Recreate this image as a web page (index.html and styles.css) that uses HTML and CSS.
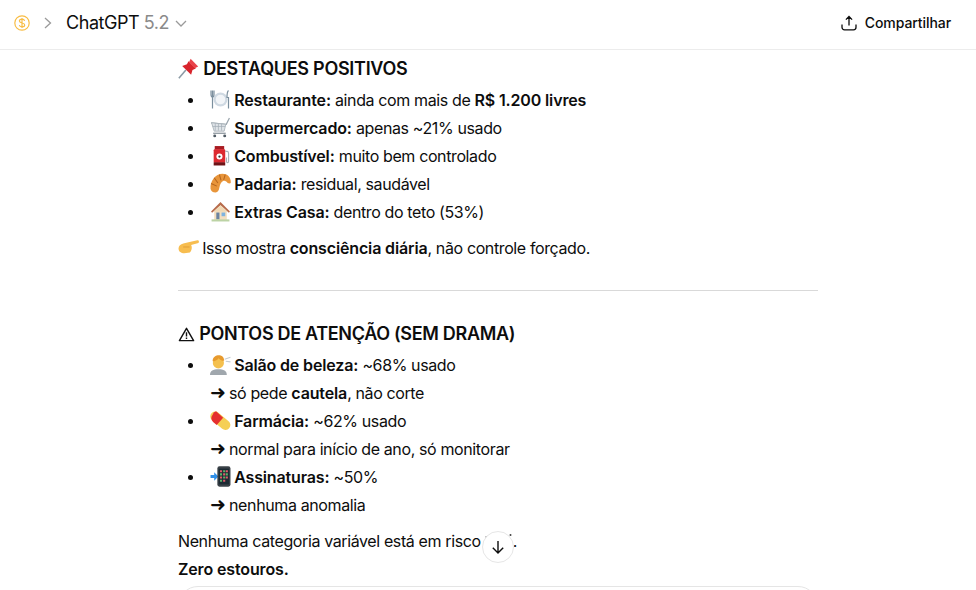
FILE: index.html
```html
<!DOCTYPE html>
<html lang="pt-BR">
<head>
<meta charset="utf-8">
<title>ChatGPT 5.2</title>
<link rel="stylesheet" href="styles.css">
</head>
<body>
<header class="topbar">
  <div class="crumbs">
    <svg class="coin" viewBox="0 0 16 16"><circle cx="8" cy="8" r="7.200"/><path d="M10.600 5.800C10.300 4.800 9.300 4.200 8 4.200c-1.500 0-2.600.8-2.600 1.900 0 2.600 5.300 1.200 5.300 3.800 0 1.200-1.100 1.900-2.700 1.900-1.400 0-2.400-.6-2.700-1.600M8 3v10"/></svg>
    <svg class="chev" viewBox="0 0 10 14"><path d="M2 2l5.500 5L2 12"/></svg>
    <span class="model">ChatGPT <span class="ver">5.2</span></span>
    <svg class="caret" viewBox="0 0 14 10"><path d="M2 2l5 5 5-5"/></svg>
  </div>
  <div class="actions">
    <button class="share">
      <svg viewBox="0 0 16 16"><path d="M8 10.500V1.600M4.900 4.600 8 1.500l3.100 3.100M1 9.500v2.800A2.500 2.500 0 0 0 3.500 14.800h9a2.500 2.500 0 0 0 2.500-2.500V9.500"/></svg>
      <span>Compartilhar</span>
    </button>
  </div>
</header>
<main class="thread">
  <article class="msg">
    <h3><svg class="emo" viewBox="0 0 20 20"><path d="M.8 19.200 7.500 11.500" stroke="#8b9aa5" stroke-width="1.500"/><path d="M10 3 17 10 13.800 11.500 12.500 16 4 7.500 8.500 6Z" fill="#d8242c"/><path d="M10.500 4 12 .8 19.200 8 16 9.800Z" fill="#e8434a"/></svg> DESTAQUES POSITIVOS</h3>
    <ul>
      <li><svg class="emo tl" viewBox="0 0 21 20"><circle cx="10.500" cy="10" r="7" fill="#cfd9e2"/><circle cx="10.500" cy="10" r="4.800" fill="#f2f5f8"/><path d="M1 1v4c0 1.500.7 2.500 1.500 2.500S4 6.500 4 5V1M2.500 1v18M18.500 1c-1.200 1-1.500 4-1.500 7h1.500v11" fill="none" stroke="#7b8f9e" stroke-width="1.200"/></svg> <b>Restaurante:</b> <span>ainda com mais de</span> <b>R$ 1.200 livres</b></li>
      <li><svg class="emo tl" viewBox="0 0 20 20"><path d="M1 5.500 15.500 7l3-6" fill="none" stroke="#9aa5ad" stroke-width="1.200"/><path d="M1.500 5.500 15 7l-1.500 6.500H4Z" fill="#dfe4e8" stroke="#a8b1b8" stroke-width=".8"/><path d="M5 6v7M8 6.500V13M11 6.500V13M2.500 9h12" stroke="#a3adb5" stroke-width=".7"/><path d="M3 15.500h12" stroke="#8a949c" stroke-width="1.200"/><circle cx="4.500" cy="18" r="1.400" fill="#4f5a63"/><circle cx="14" cy="18" r="1.400" fill="#4f5a63"/></svg> <b>Supermercado:</b> <span>apenas ~21% usado</span></li>
      <li><svg class="emo tl" viewBox="0 0 20 20"><rect x="4.500" y="1" width="9" height="3.500" fill="#a81c22"/><rect x="3.500" y="4" width="11" height="13" rx="1" fill="#dc2a30"/><rect x="3.500" y="16.500" width="11" height="3" fill="#6e1317"/><circle cx="9" cy="11" r="2.900" fill="#fff"/><circle cx="9" cy="11" r="1.100" fill="#333"/><path d="M14.500 6H16.500c1 0 1.200 1 1.200 2v7.500c0 1.800-2 1.800-2 0V12" fill="none" stroke="#a9b3ba" stroke-width="1.100"/></svg> <b>Combustível:</b> <span>muito bem controlado</span></li>
      <li><svg class="emo tl" viewBox="0 0 20 20"><path d="M.5 15C0 8 5 .8 12 .8c4.500 0 7.800 3.200 7.800 8 0 1.500-1.800 1.200-3 .7-1-1.500-2.300-2.500-4.300-2-2 .8-3 3.500-3.500 6-.5 3-1.500 5-3.700 5-3 0-4.300-1.200-4.800-3.500Z" fill="#e8953a"/><path d="M9 1.500 10.500 7M14.500 1.500 13 6.500M4 4.500 7.500 9.500M1 10l5.500 2.500" stroke="#b5641d" stroke-width="1"/></svg> <b>Padaria:</b> <span>residual, saudável</span></li>
      <li><svg class="emo tl" viewBox="0 0 20 20"><rect x="4" y="9" width="12" height="9" fill="#f3dfc0"/><path d="M10 1 1 10l1 1.200 8-7.200 8 7.200 1-1.200Z" fill="#b76b4b"/><path d="M10 4 3.500 10h13Z" fill="#f1d9b4"/><rect x="6" y="11" width="3" height="6.500" fill="#6b84a0"/><rect x="11" y="11" width="3.500" height="3.500" fill="#7fb4e0"/><rect x="1.500" y="17.500" width="17" height="2" fill="#bcd3a5"/></svg> <b>Extras Casa:</b> <span>dentro do teto (53%)</span></li>
    </ul>
    <p><svg class="emo tl" viewBox="0 0 20 20"><path d="M.5 11c0-2.500 2-4 4.500-4.800L10 5l8.500-1.800c1.800-.2 2 2.500.2 2.800L12.500 7.500c1.200 1.800.6 6-1.200 7.200L6 15.500C3 15.500.5 14 .5 11Z" fill="#f7bd4f"/><path d="M5 9.500h6" stroke="#dc9a33" stroke-width=".8"/></svg> <span>Isso mostra</span> <b>consciência diária</b><span>, não controle forçado.</span></p>
    <hr>
    <h3 class="second"><svg class="emo warn" viewBox="0 0 18 18"><path d="M9 2.500 1.500 15.500h15Z" fill="none" stroke="#111" stroke-width="1.500" stroke-linejoin="round"/><path d="M9 6.500v4.500M9 12.300v1.400" stroke="#111" stroke-width="1.500"/></svg> PONTOS DE ATENÇÃO (SEM DRAMA)</h3>
    <ul>
      <li><svg class="emo tl" viewBox="0 0 20 20"><path d="M0 20c0-4 3-5.500 8-5.500s8 1.500 8 5.500Z" fill="#a0a7ad"/><circle cx="8" cy="8.500" r="5.300" fill="#f4c04e"/><path d="M2.500 7c0-4 3-5.800 6-5.800 3 0 5 2 5 5.300-2 0-4-1-5.500-2.500C7 6 4.500 7 2.500 7Z" fill="#e79a2e"/><path d="M14 5l5.500-2M15 7l4.500.5" stroke="#c5ccd2" stroke-width="1"/></svg> <b>Salão de beleza:</b> <span>~68% usado</span><br><span class="arrow">➜</span> <span>só pede</span> <b>cautela</b><span>, não corte</span></li>
      <li><svg class="emo tl" viewBox="0 0 20 20"><rect x="-1" y="5.500" width="22" height="9.500" rx="4.700" transform="rotate(40 10 10)" fill="#f5cf55"/><path d="M5.800 1.300 12.500 7.300 6.400 14.400 2.900 11.400A4.700 4.700 0 0 1 2.400 4.800 4.700 4.700 0 0 1 5.800 1.300Z" fill="#e5302f"/></svg> <b>Farmácia:</b> <span>~62% usado</span><br><span class="arrow">➜</span> <span>normal para início de ano, só monitorar</span></li>
      <li><svg class="emo tl" viewBox="0 0 20 20"><path d="M.5 8.500h3.500V6l4 4-4 4v-2.500H.5Z" fill="#2f8fe8"/><rect x="7" y=".3" width="12.500" height="19.400" rx="2" fill="#3a4147"/><rect x="8.300" y="2.500" width="9.900" height="15" fill="#1c2a33"/><path d="M9.500 4h2v2h-2ZM12.500 7h2v2h-2ZM15 4h2v2h-2ZM9.500 10h2v2h-2ZM15 10h2v2h-2ZM12.500 13h2v2h-2Z" fill="#e05a6a"/><path d="M12.500 4h2v2h-2ZM9.500 7h2v2h-2ZM15 7h2v2h-2ZM12.500 10h2v2h-2ZM9.500 13h2v2h-2Z" fill="#58b368"/></svg> <b>Assinaturas:</b> <span>~50%</span><br><span class="arrow">➜</span> <span>nenhuma anomalia</span></li>
    </ul>
    <p><span>Nenhuma categoria variável está em risco</span> <svg class="emo wide" viewBox="0 0 27 21"><circle cx="1" cy="7" r="1" fill="#444"/><circle cx="25" cy="5" r="1" fill="#444"/></svg><span>.</span><br><b>Zero estouros.</b></p>
    <div class="card"></div>
  </article>
  <button class="down" aria-label="Rolar para baixo"><svg viewBox="0 0 16 16"><path d="M8 2v12M2.800 8.800 8 14l5.200-5.200"/></svg></button>
</main>
</body>
</html>
```

FILE: styles.css
```css
* { box-sizing: border-box; }
html, body { margin: 0; height: 100%; }
body {
  width: 976px;
  height: 590px;
  overflow: hidden;
  background: #fff;
  color: #0d0d0d;
  font-family: Inter, "Liberation Sans", sans-serif;
  font-size: 16px;
  line-height: 28px;
}
.topbar {
  height: 50px;
  display: flex;
  align-items: center;
  justify-content: space-between;
  border-bottom: 1px solid #ececec;
  padding: 0 25px 4px 14px;
}
.crumbs { display: flex; align-items: center; }
.coin { width: 16px; height: 16px; fill: none; stroke: #f8bd45; stroke-width: 1.200; }
.chev { width: 10px; height: 14px; margin-left: 13px; fill: none; stroke: #9a9a9a; stroke-width: 1.300; }
.model { margin-left: 13px; font-size: 18px; letter-spacing: -0.45px; }
.ver { color: #8a8a8a; }
.caret { width: 14px; height: 10px; margin-left: 5px; margin-top: 2px; fill: none; stroke: #9a9a9a; stroke-width: 1.300; }
.share {
  display: flex;
  align-items: center;
  gap: 8px;
  border: 0;
  padding: 0;
  background: none;
  color: #0d0d0d;
  font: 500 14px/20px Inter, "Liberation Sans", sans-serif;
  letter-spacing: -0.08px;
}
.share svg { width: 16px; height: 16px; fill: none; stroke: #0d0d0d; stroke-width: 1.300; }
.thread { position: relative; height: 540px; }
.msg { width: 640px; margin-left: 178px; padding-top: 5px; letter-spacing: -0.38px; }
h3 { margin: 0 0 3px; font-size: 18px; line-height: 28px; font-weight: 600; letter-spacing: -0.28px; }
.second { margin-top: 29px; letter-spacing: -0.32px; }
ul { margin: 0; padding-left: 32px; list-style: none; }
li { position: relative; }
li::before {
  content: "";
  position: absolute;
  left: -22px;
  top: 12px;
  width: 5px;
  height: 5px;
  border-radius: 50%;
  background: #0d0d0d;
}
p { margin: 8px 0 0; }
b { font-weight: 600; letter-spacing: -0.14px; }
hr { margin: 28px 0 0; border: 0; border-top: 1px solid #d9d9d9; }
.emo { width: 21px; height: 21px; margin-block: -4px; vertical-align: 0; }
.emo.tl { margin-right: -1px; }
.emo.warn { width: 17px; height: 17px; vertical-align: 1px; }
.emo.wide { width: 28px; }
.arrow { font-family: "DejaVu Sans", sans-serif; font-size: 19px; line-height: 1; letter-spacing: -1px; }
.card {
  height: 40px;
  margin-top: 3px;
  border: 1px solid #e5e5e5;
  border-radius: 25px;
}
.down {
  position: absolute;
  left: 482px;
  top: 481px;
  width: 32px;
  height: 32px;
  padding: 0;
  display: flex;
  align-items: center;
  justify-content: center;
  border: 1px solid #e6e6e6;
  border-radius: 50%;
  background: #fff;
}
.down svg { width: 16px; height: 16px; fill: none; stroke: #0d0d0d; stroke-width: 1.400; }
```
